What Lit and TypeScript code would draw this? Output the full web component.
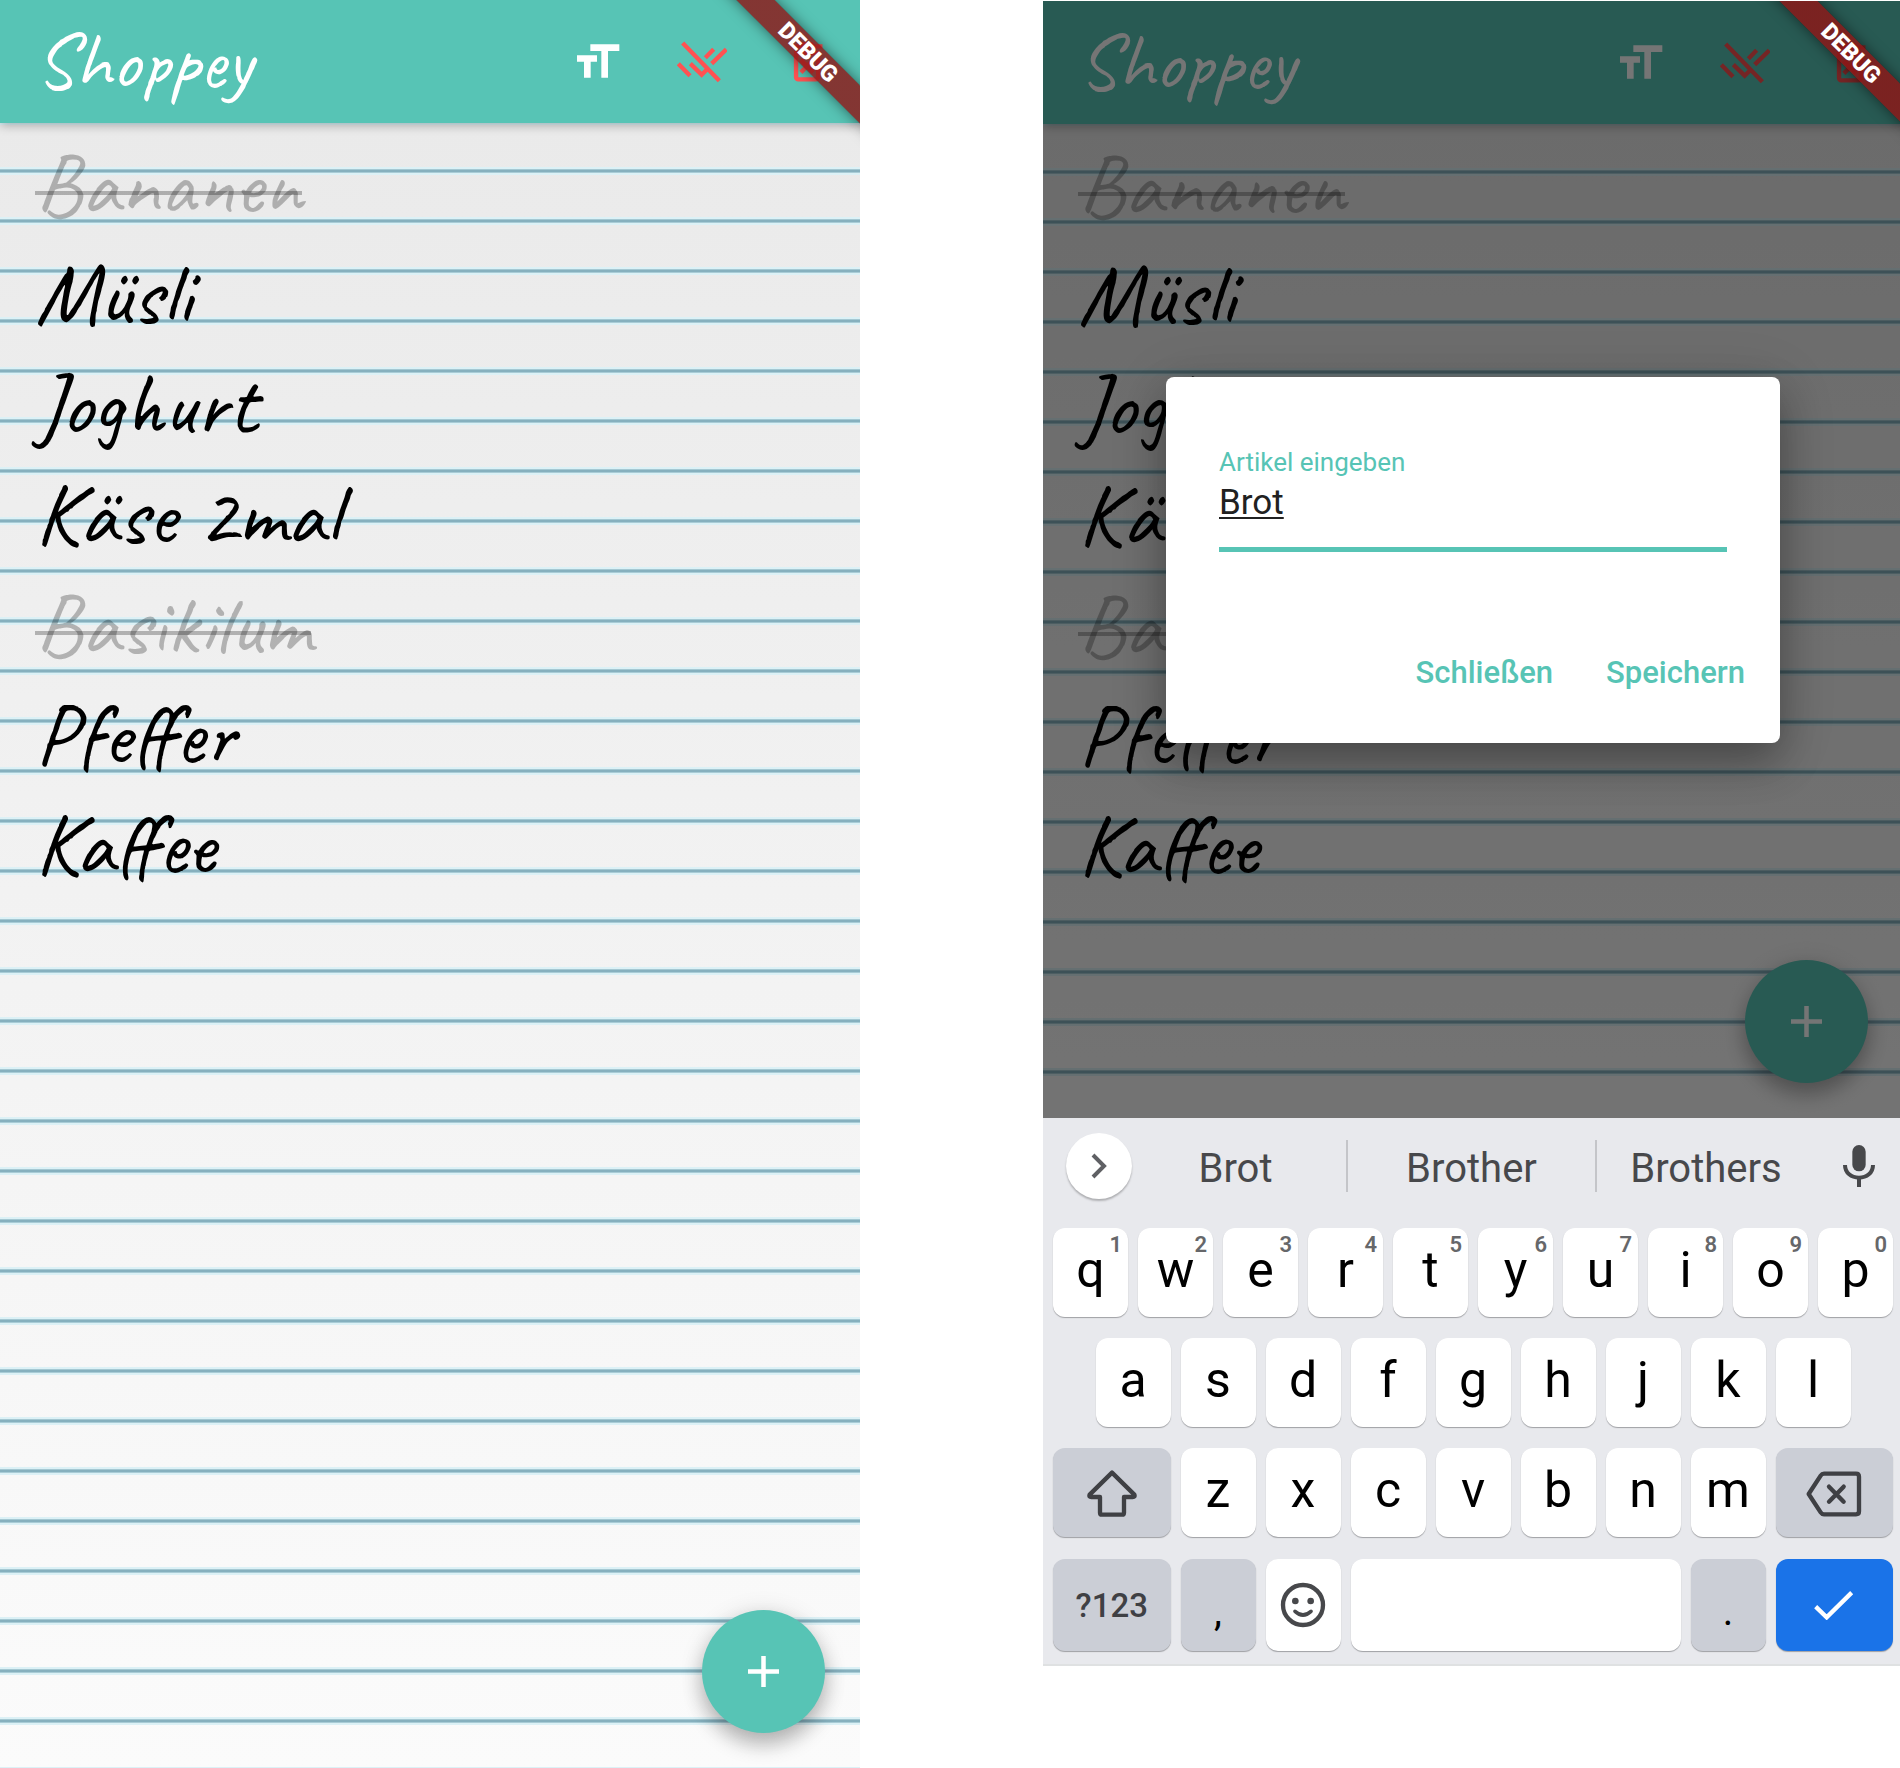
import { LitElement, html, css, nothing } from "lit";
import { customElement, property } from "lit/decorators.js";

interface Item {
  name: string;
  done?: boolean;
}

interface Key {
  label: string;
  span: number;
  hint?: string;
  kind?: "plain" | "dim" | "mark" | "action";
  icon?: unknown;
  name?: string;
  start?: number;
}

const ITEMS: Item[] = [
  { name: "Bananen", done: true },
  { name: "Müsli" },
  { name: "Joghurt" },
  { name: "Käse 2mal" },
  { name: "Basikilum", done: true },
  { name: "Pfeffer" },
  { name: "Kaffee" },
];

const textSizeIcon = html`<svg class="icon" viewBox="96 109 150 150" aria-hidden="true">
  <path fill="currentColor" d="M151 131H238V151H204V231H184V151H151ZM111 164H171V183H152V231H132V183H111Z" />
</svg>`;

const uncheckIcon = html`<svg class="icon" viewBox="412 109 150 150" aria-hidden="true">
  <path
    fill="none"
    stroke="currentColor"
    stroke-width="13"
    d="M429 127L539 240M416 189L451 225M452 189L486 222L504 204M522 146L497 171M560 146L516 189"
  />
</svg>`;

const trashIcon = html`<svg class="icon" viewBox="726 109 150 150" aria-hidden="true">
  <g transform="translate(722 104) scale(6.6)">
    <path
      fill="currentColor"
      d="M14.12 10.47L12 12.59l-2.13-2.12-1.41 1.41L10.59 14l-2.12 2.12 1.41 1.41L12 15.41l2.12 2.12 1.41-1.41L13.41 14l2.12-2.12zM15.5 4l-1-1h-5l-1 1H5v2h14V4zM6 19c0 1.1.9 2 2 2h8c1.1 0 2-.9 2-2V7H6v12zM8 9h8v10H8V9z"
    />
  </g>
</svg>`;

const shiftIcon = html`<svg width="50" height="48" viewBox="0 0 150 144" aria-hidden="true">
  <path
    fill="none"
    stroke="currentColor"
    stroke-width="13"
    stroke-linejoin="round"
    d="M75 8L8 74Q5 81 13 81H39V128Q39 134 45 134H105Q111 134 111 128V81H137Q145 81 142 74Z"
  />
</svg>`;

const eraseIcon = html`<svg width="56" height="46" viewBox="0 0 168 138" aria-hidden="true">
  <g fill="none" stroke="currentColor" stroke-width="13" stroke-linejoin="round" stroke-linecap="round">
    <path d="M8 69L44 14Q48 8 54 8H150Q159 8 159 17V121Q159 130 150 130H54Q48 130 44 124Z" />
    <path d="M69 47L113 92M113 47L69 92" />
  </g>
</svg>`;

const smileIcon = html`<svg width="46" height="46" viewBox="0 0 138 138" aria-hidden="true">
  <circle cx="69" cy="69" r="60" fill="none" stroke="currentColor" stroke-width="13" />
  <circle cx="46" cy="57" r="10" fill="currentColor" />
  <circle cx="92" cy="57" r="10" fill="currentColor" />
  <path d="M45 88Q69 110 93 88" fill="none" stroke="currentColor" stroke-width="11" stroke-linecap="round" />
</svg>`;

const checkIcon = html`<svg width="40" height="30" viewBox="0 0 120 90" aria-hidden="true">
  <path d="M5 50L38 82L113 8" fill="none" stroke="currentColor" stroke-width="13" />
</svg>`;

const letters = (row: string, span = 2): Key[] => [...row].map((label) => ({ label, span }));

const KEY_ROWS: Key[][] = [
  letters("qwertyuiop").map((key, i) => ({ ...key, hint: String((i + 1) % 10) })),
  letters("asdfghjkl").map((key, i) => (i === 0 ? { ...key, start: 2 } : key)),
  [
    { label: "", span: 3, kind: "dim", icon: shiftIcon, name: "Umschalt" },
    ...letters("zxcvbnm"),
    { label: "", span: 3, kind: "dim", icon: eraseIcon, name: "Löschen" },
  ],
  [
    { label: "?123", span: 3, kind: "dim" },
    { label: ",", span: 2, kind: "mark" },
    { label: "", span: 2, icon: smileIcon, name: "Emoji" },
    { label: "", span: 8, name: "Leertaste" },
    { label: ".", span: 2, kind: "mark" },
    { label: "", span: 3, kind: "action", icon: checkIcon, name: "Fertig" },
  ],
];

@customElement("shopping-screen")
export class ShoppingScreen extends LitElement {
  @property({ type: Boolean }) editing = false;

  static styles = css`
    :host {
      display: flex;
      flex-direction: column;
      position: relative;
      overflow: hidden;
      font-family: Roboto, "Liberation Sans", sans-serif;
    }
    .bar {
      display: flex;
      align-items: center;
      gap: 55px;
      box-sizing: border-box;
      height: 123px;
      padding: 0 28px 0 35px;
      background: #57c4b5;
      color: #fff;
      box-shadow: 0 2px 10px rgba(0, 0, 0, 0.3);
      z-index: 1;
    }
    .title {
      flex: 1;
      margin: 0;
      font: 500 79px/123px Caveat, Lato, sans-serif;
    }
    .tool {
      display: flex;
      padding: 0;
      border: 0;
      background: none;
      color: inherit;
    }
    .danger {
      color: #ff5252;
    }
    .icon {
      width: 50px;
      height: 50px;
    }
    .paper {
      flex: 1;
      margin: 0;
      padding: 6px 35px;
      list-style: none;
      background:
        linear-gradient(
            #dcf1f6 0 2px,
            #a5c8d2 2px 3px,
            #86b0be 3px 5px,
            #a9ccd6 5px 6px,
            #dcf1f6 6px 8px,
            transparent 8px
          )
          0 44px / 100% 50px,
        linear-gradient(#eaeaea, #f0f0f0 35%, #f6f6f6 70%, #fbfbfb);
    }
    .item {
      font: 400 88px/110px Caveat, Lato, sans-serif;
      color: #000;
    }
    .done {
      color: rgba(0, 0, 0, 0.26);
      text-decoration: none;
      background: linear-gradient(currentColor 0 100%) 0 62px / 100% 4px no-repeat;
    }
    .add {
      position: absolute;
      right: 35px;
      bottom: 35px;
      display: grid;
      place-items: center;
      width: 123px;
      height: 123px;
      padding: 0;
      border: 0;
      border-radius: 50%;
      background: #57c4b5;
      color: #fff;
      box-shadow: 0 12px 20px rgba(0, 0, 0, 0.24), 0 2px 24px rgba(0, 0, 0, 0.12);
    }
    .scrim {
      position: absolute;
      inset: 0;
      z-index: 2;
      display: flex;
      align-items: center;
      padding: 0 123px;
      background: rgba(0, 0, 0, 0.54);
    }
    .dialog {
      flex: 1;
      box-sizing: border-box;
      padding: 69px 0 36px;
      border-radius: 8px;
      background: #fff;
      box-shadow: 0 20px 40px rgba(0, 0, 0, 0.28), 0 8px 60px rgba(0, 0, 0, 0.14);
    }
    .field {
      display: flex;
      flex-direction: column;
      margin: 0 53px;
      border-bottom: 5px solid #57c4b5;
    }
    .label {
      font-size: 26px;
      line-height: 33px;
      color: #57c4b5;
    }
    .input {
      width: 100%;
      height: 48px;
      padding: 0;
      margin-bottom: 20px;
      border: 0;
      outline: 0;
      background: none;
      font: 400 35px/48px Roboto, "Liberation Sans", sans-serif;
      color: #212121;
      text-decoration: underline;
      text-decoration-thickness: 2px;
      text-underline-offset: 3px;
    }
    .actions {
      display: flex;
      justify-content: flex-end;
      gap: 53px;
      margin-top: 87px;
      padding: 0 35px;
    }
    .action {
      padding: 0;
      border: 0;
      background: none;
      font: 500 31px/68px Roboto, "Liberation Sans", sans-serif;
      color: #57c4b5;
    }
    .ribbon {
      position: absolute;
      top: 39px;
      right: -100px;
      z-index: 3;
      width: 304px;
      transform: rotate(45deg);
      background: linear-gradient(rgba(183, 28, 28, 0.63) 0 100%), rgba(0, 0, 0, 0.5);
      box-shadow: 0 0 14px rgba(0, 0, 0, 0.5);
      color: #fff;
      font-size: 23px;
      font-weight: 900;
      line-height: 27px;
      text-align: center;
    }
  `;

  render() {
    return html`
      <header class="bar">
        <h1 class="title">Shoppey</h1>
        <button class="tool" aria-label="Schriftgröße">${textSizeIcon}</button>
        <button class="tool danger" aria-label="Markierungen aufheben">${uncheckIcon}</button>
        <button class="tool danger" aria-label="Liste löschen">${trashIcon}</button>
      </header>
      <ul class="paper">
        ${ITEMS.map(
          (item) => html`<li class="item">${item.done ? html`<s class="done">${item.name}</s>` : item.name}</li>`,
        )}
      </ul>
      <button class="add" aria-label="Artikel hinzufügen">
        <svg width="31" height="31" viewBox="0 0 62 62" aria-hidden="true">
          <path d="M31 0V62M0 31H62" stroke="currentColor" stroke-width="9" />
        </svg>
      </button>
      ${this.editing
        ? html`<div class="scrim">
            <form class="dialog" role="dialog" @submit=${(e: Event) => e.preventDefault()}>
              <div class="field">
                <label class="label" for="article">Artikel eingeben</label>
                <input class="input" id="article" type="text" spellcheck="false" .value=${"Brot"} />
              </div>
              <div class="actions">
                <button class="action" type="button">Schließen</button>
                <button class="action" type="submit">Speichern</button>
              </div>
            </form>
          </div>`
        : nothing}
      <div class="ribbon">DEBUG</div>
    `;
  }
}

@customElement("soft-keyboard")
export class SoftKeyboard extends LitElement {
  static styles = css`
    :host {
      display: block;
      box-sizing: border-box;
      padding-bottom: 13px;
      border-bottom: 2px solid #dfe1e2;
      background: #e8e9ed;
      font-family: Roboto, "Liberation Sans", sans-serif;
    }
    button {
      padding: 0;
      border: 0;
      font-family: inherit;
    }
    .suggestions {
      display: grid;
      grid-template-columns:
        minmax(0, 82fr) minmax(0, 221fr) minmax(0, 251fr)
        minmax(0, 218fr) minmax(0, 88fr);
      align-items: center;
      height: 96px;
    }
    .expand {
      display: grid;
      place-items: center;
      width: 66px;
      height: 66px;
      margin-left: 23px;
      border-radius: 50%;
      background: #fff;
      color: #5f6064;
      box-shadow: 0 2px 2px rgba(0, 0, 0, 0.25);
    }
    .word {
      height: 52px;
      background: none;
      font-size: 40px;
      line-height: 46px;
      padding-top: 6px;
      color: #47484b;
    }
    .middle {
      border: solid #c4c5c9;
      border-width: 0 2px;
    }
    .mic {
      display: grid;
      place-items: center;
      background: none;
      color: #47484b;
    }
    .keys {
      display: grid;
      gap: 21px;
      padding: 14px 10px 0 10px;
    }
    .row {
      display: grid;
      grid-template-columns: repeat(20, minmax(0, 1fr));
      grid-auto-rows: 89px;
      gap: 10px;
    }
    .row:last-child {
      grid-auto-rows: 92px;
      padding-top: 1px;
    }
    .key {
      display: grid;
      grid-template: 100% / 100%;
      place-items: center;
      border-radius: 12px;
      background: #fff;
      box-shadow: 0 1px 1px #9fa0a4;
      font-size: 50px;
      line-height: 60px;
      color: #000;
    }
    .glyph,
    .hint {
      grid-area: 1 / 1;
    }
    .glyph {
      display: flex;
      padding-bottom: 6px;
    }
    .picture {
      padding: 0;
      color: #47484b;
    }
    .hint {
      place-self: start end;
      padding: 5px 6px 0 0;
      font-size: 22px;
      font-weight: 600;
      line-height: 24px;
      color: #66676a;
    }
    .dim {
      background: #cbced6;
      color: #3f4044;
      font-size: 33px;
      font-weight: 500;
    }
    .dim .glyph {
      padding: 2px 0 0;
      color: #3f4044;
    }
    .mark {
      background: #cbced6;
      font-size: 40px;
    }
    .mark .glyph {
      padding: 14px 0 0;
    }
    .action {
      background: #1a73e8;
    }
    .action .glyph {
      color: #fff;
    }
    .s2 {
      grid-column-end: span 2;
    }
    .s3 {
      grid-column-end: span 3;
    }
    .s8 {
      grid-column-end: span 8;
    }
    .indent {
      grid-column-start: 2;
    }
  `;

  private renderKey(key: Key) {
    const glyph = key.icon
      ? html`<span class="glyph picture">${key.icon}</span>`
      : html`<span class="glyph">${key.label}</span>`;
    return html`<button
      class="key ${key.kind ?? "plain"} s${key.span} ${key.start ? "indent" : ""}"
      aria-label=${key.name ?? key.label}
    >
      ${glyph}${key.hint ? html`<span class="hint">${key.hint}</span>` : nothing}
    </button>`;
  }

  render() {
    return html`
      <div class="suggestions">
        <button class="expand" aria-label="Mehr">
          <svg width="18" height="28" viewBox="0 0 18 28" aria-hidden="true">
            <path d="M3 3L14 14L3 25" fill="none" stroke="currentColor" stroke-width="4" />
          </svg>
        </button>
        <button class="word">Brot</button>
        <button class="word middle">Brother</button>
        <button class="word">Brothers</button>
        <button class="mic" aria-label="Spracheingabe">
          <svg width="32" height="42" viewBox="0 0 96 126" aria-hidden="true">
            <rect x="28" y="0" width="40" height="79" rx="20" fill="currentColor" />
            <path
              d="M6 60C6 84 25 98 48 98S90 84 90 60M48 98V126"
              fill="none"
              stroke="currentColor"
              stroke-width="12"
            />
          </svg>
        </button>
      </div>
      <div class="keys">
        ${KEY_ROWS.map((row) => html`<div class="row">${row.map((key) => this.renderKey(key))}</div>`)}
      </div>
    `;
  }
}

@customElement("app-root")
export class AppRoot extends LitElement {
  static styles = css`
    :host {
      display: grid;
      grid-template-columns: 860fr 857fr;
      gap: 183px;
      min-height: 100vh;
      background: #fff;
    }
    .phone {
      display: flex;
      flex-direction: column;
      min-width: 0;
      overflow: hidden;
    }
    .typing {
      margin: 1px 0 102px;
    }
    .view {
      flex: 1;
    }
    .typing .view,
    .typing .keyboard {
      margin-right: -3px;
    }
  `;

  render() {
    return html`
      <section class="phone">
        <shopping-screen class="view"></shopping-screen>
      </section>
      <section class="phone typing">
        <shopping-screen class="view" editing></shopping-screen>
        <soft-keyboard class="keyboard"></soft-keyboard>
      </section>
    `;
  }
}
